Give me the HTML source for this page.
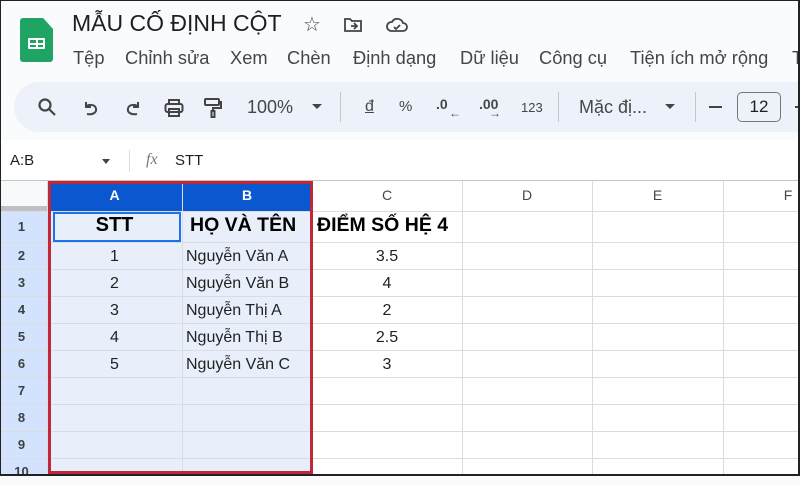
<!DOCTYPE html>
<html><head><meta charset="utf-8"><style>
*{margin:0;padding:0;box-sizing:border-box}
body{width:800px;height:476px;overflow:hidden;background:#f9fbfd;font-family:"Liberation Sans",Arial,sans-serif;position:relative;color:#444746}
.a{position:absolute;white-space:nowrap}
.ic{position:absolute}
.hl{position:absolute;background:#dadce0}
.m{font-size:18.3px;top:47px}
</style></head><body>
<div class="a" style="left:20px;top:18px;width:33px;height:44px;background:#1fa463;border-radius:3px;clip-path:polygon(0 0,70% 0,100% 25%,100% 100%,0 100%)"></div>
<div class="a" style="left:28px;top:38px;width:17px;height:11px;border:2px solid #fff;border-radius:1px"></div>
<div class="a" style="left:28px;top:42.5px;width:17px;height:2px;background:#fff"></div>
<div class="a" style="left:35.5px;top:38px;width:2px;height:11px;background:#fff"></div>
<div class="a" style="left:72px;top:10px;font-size:23px;color:#1f1f1f">MẪU CỐ ĐỊNH CỘT</div>
<div class="a" style="left:303px;top:12px;font-size:20px;color:#444">☆</div>
<svg class="ic" style="left:343px;top:16px" width="20" height="18" viewBox="0 0 20 18" fill="none" stroke="#444" stroke-width="1.8"><path d="M2 3h5l2 2h9v10H2z"/><path d="M8 10h6M11 7l3 3-3 3"/></svg>
<svg class="ic" style="left:385px;top:15px" width="24" height="20" viewBox="0 0 24 20" fill="none" stroke="#444" stroke-width="1.8"><path d="M6 16h12a4 4 0 0 0 0-8 6 6 0 0 0-11-1A4.5 4.5 0 0 0 6 16z"/><path d="M9 12l2 2 4-4"/></svg>
<div class="a m" style="left:73px">Tệp</div>
<div class="a m" style="left:125px">Chỉnh sửa</div>
<div class="a m" style="left:230px">Xem</div>
<div class="a m" style="left:287px">Chèn</div>
<div class="a m" style="left:353px">Định dạng</div>
<div class="a m" style="left:460px">Dữ liệu</div>
<div class="a m" style="left:539px">Công cụ</div>
<div class="a m" style="left:630px">Tiện ích mở rộng</div>
<div class="a m" style="left:792px">T</div>
<div class="a" style="left:14px;top:82px;width:820px;height:50px;background:#edf2fa;border-radius:25px"></div>
<svg class="ic" style="left:37px;top:97px" width="20" height="20" viewBox="0 0 20 20" fill="none" stroke="#444" stroke-width="2.2"><circle cx="8" cy="8" r="5.5"/><path d="M12 12l6 6"/></svg>
<svg class="ic" style="left:82px;top:99px" width="18" height="18" viewBox="0 0 18 18" fill="none" stroke="#444" stroke-width="2"><path d="M4 3v5h5"/><path d="M4 8c2-3 9-3 10 1.5S10 16 5 15"/></svg>
<svg class="ic" style="left:124px;top:99px" width="18" height="18" viewBox="0 0 18 18" fill="none" stroke="#444" stroke-width="2"><path d="M14 3v5H9"/><path d="M14 8c-2-3-9-3-10 1.5S8 16 13 15"/></svg>
<svg class="ic" style="left:163px;top:97px" width="22" height="22" viewBox="0 0 22 22" fill="none" stroke="#444" stroke-width="2"><path d="M6 7V3h10v4"/><rect x="2.5" y="7" width="17" height="8" rx="2"/><rect x="6" y="12" width="10" height="7"/></svg>
<svg class="ic" style="left:202px;top:97px" width="22" height="22" viewBox="0 0 22 22" fill="none" stroke="#444" stroke-width="2"><rect x="3" y="2" width="14" height="6" rx="1"/><path d="M17 5h2v6h-8v3"/><rect x="9.5" y="14" width="3" height="6"/></svg>
<div class="a" style="left:247px;top:97px;font-size:18px">100%</div>
<div class="a" style="left:312px;top:104px;border:5px solid transparent;border-top:5px solid #444"></div>
<div class="hl" style="left:340px;top:92px;width:1px;height:30px;background:#c7c7c7"></div>
<div class="a" style="left:365px;top:98px;font-size:16px;text-decoration:underline">đ</div>
<div class="a" style="left:399px;top:98px;font-size:15px">%</div>
<div class="a" style="left:436px;top:96px;font-size:14px;font-weight:bold">.0</div>
<div class="a" style="left:449px;top:106px;font-size:12px;font-weight:bold">←</div>
<div class="a" style="left:479px;top:96px;font-size:14px;font-weight:bold">.00</div>
<div class="a" style="left:489px;top:106px;font-size:12px;font-weight:bold">→</div>
<div class="a" style="left:521px;top:100px;font-size:13px">123</div>
<div class="hl" style="left:558px;top:92px;width:1px;height:30px;background:#c7c7c7"></div>
<div class="a" style="left:579px;top:97px;font-size:18px">Mặc đị...</div>
<div class="a" style="left:665px;top:104px;border:5px solid transparent;border-top:5px solid #444"></div>
<div class="hl" style="left:695px;top:92px;width:1px;height:30px;background:#c7c7c7"></div>
<div class="a" style="left:709px;top:106px;width:13px;height:2px;background:#444"></div>
<div class="a" style="left:737px;top:92px;width:44px;height:30px;border:1.5px solid #747775;border-radius:5px;font-size:17px;text-align:center;line-height:27px;color:#1f1f1f">12</div>
<div class="a" style="left:795px;top:106px;width:10px;height:2px;background:#444"></div>
<div class="a" style="left:0;top:140px;width:800px;height:40px;background:#fff"></div>
<div class="a" style="left:10px;top:152px;font-size:15px;color:#1f1f1f">A:B</div>
<div class="a" style="left:102px;top:159px;border:4px solid transparent;border-top:5px solid #444"></div>
<div class="hl" style="left:129px;top:150px;width:1px;height:22px"></div>
<div class="a" style="left:146px;top:151px;font-size:16px;font-style:italic;font-family:'Liberation Serif',serif;color:#777">fx</div>
<div class="a" style="left:175px;top:152px;font-size:15px;color:#1f1f1f">STT</div>
<div class="a" style="left:0;top:180px;width:800px;height:296px;background:#fff;border-top:1px solid #c4c7c5"></div>
<div class="a" style="left:0;top:181px;width:47px;height:30px;background:#f8f9fa"></div>
<div class="a" style="left:0;top:206px;width:47px;height:5px;background:#bdc1c6"></div>
<div class="a" style="left:0;top:211px;width:47px;height:265px;background:#d3e3fd"></div>
<div class="a" style="left:47px;top:211px;width:265px;height:265px;background:#e8effb"></div>
<div class="a" style="left:47px;top:181px;width:265px;height:30px;background:#0b57d0"></div>
<div class="a" style="left:53px;top:212px;width:128px;height:30px;border:2px solid #1a73e8;background:#e8effb"></div>
<div class="hl" style="left:0;top:211px;width:800px;height:1px"></div>
<div class="hl" style="left:0;top:242px;width:800px;height:1px"></div>
<div class="hl" style="left:0;top:269px;width:800px;height:1px"></div>
<div class="hl" style="left:0;top:296px;width:800px;height:1px"></div>
<div class="hl" style="left:0;top:323px;width:800px;height:1px"></div>
<div class="hl" style="left:0;top:350px;width:800px;height:1px"></div>
<div class="hl" style="left:0;top:377px;width:800px;height:1px"></div>
<div class="hl" style="left:0;top:404px;width:800px;height:1px"></div>
<div class="hl" style="left:0;top:431px;width:800px;height:1px"></div>
<div class="hl" style="left:0;top:458px;width:800px;height:1px"></div>
<div class="hl" style="left:47px;top:181px;width:1px;height:295px"></div>
<div class="hl" style="left:182px;top:181px;width:1px;height:295px"></div>
<div class="hl" style="left:462px;top:181px;width:1px;height:295px"></div>
<div class="hl" style="left:592px;top:181px;width:1px;height:295px"></div>
<div class="hl" style="left:723px;top:181px;width:1px;height:295px"></div>
<div class="a" style="left:47px;top:187px;width:135px;text-align:center;font-size:14px;font-weight:bold;color:#fff">A</div>
<div class="a" style="left:182px;top:187px;width:130px;text-align:center;font-size:14px;font-weight:bold;color:#fff">B</div>
<div class="a" style="left:312px;top:187px;width:150px;text-align:center;font-size:14px">C</div>
<div class="a" style="left:462px;top:187px;width:130px;text-align:center;font-size:14px">D</div>
<div class="a" style="left:592px;top:187px;width:131px;text-align:center;font-size:14px">E</div>
<div class="a" style="left:723px;top:187px;width:130px;text-align:center;font-size:14px">F</div>
<div style="position:absolute;left:0;top:211px;width:43px;font-size:13px;font-weight:bold;color:#3c4043;text-align:center;line-height:27px">
<div style="height:31px;line-height:31px">1</div><div>2</div><div>3</div><div>4</div><div>5</div><div>6</div><div>7</div><div>8</div><div>9</div><div>10</div></div>
<div class="a" style="left:47px;top:214px;width:135px;text-align:center;font-size:20px;font-weight:bold;color:#000">STT</div>
<div class="a" style="left:190px;top:214px;font-size:19.5px;font-weight:bold;color:#000">HỌ VÀ TÊN</div>
<div class="a" style="left:317px;top:214px;font-size:19.5px;font-weight:bold;color:#000">ĐIỂM SỐ HỆ 4</div>
<div style="position:absolute;left:47px;top:243px;width:135px;font-size:16px;color:#222;text-align:center;line-height:27px"><div>1</div><div>2</div><div>3</div><div>4</div><div>5</div></div>
<div style="position:absolute;left:186px;top:243px;font-size:16px;color:#222;line-height:27px"><div>Nguyễn Văn A</div><div>Nguyễn Văn B</div><div>Nguyễn Thị A</div><div>Nguyễn Thị B</div><div>Nguyễn Văn C</div></div>
<div style="position:absolute;left:312px;top:243px;width:150px;font-size:16px;color:#222;text-align:center;line-height:27px"><div>3.5</div><div>4</div><div>2</div><div>2.5</div><div>3</div></div>
<div class="a" style="left:48px;top:181px;width:265px;height:293px;border:3px solid #c0283a"></div>
<div class="a" style="left:0;top:0;width:800px;height:476px;border:1px solid #222;border-bottom:2px solid #222;border-right:2px solid #222"></div>
</body></html>
